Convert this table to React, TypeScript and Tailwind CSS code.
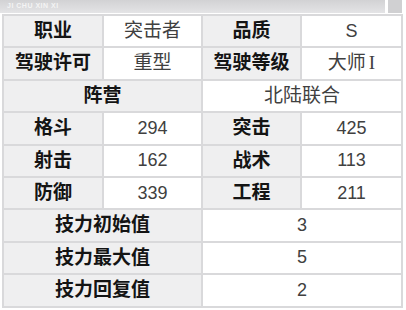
import React from "react";

const font = { fontFamily: '"Liberation Sans", "Noto Sans CJK SC", sans-serif' };

function H({ children, span }: { children: React.ReactNode; span?: boolean }) {
  return (
    <div
      className={`flex items-center justify-center bg-[#efeff0] text-[19px] font-bold text-[#141414] ${span ? "col-span-2" : ""}`}
    >
      {children}
    </div>
  );
}

function V({ children, span, num }: { children: React.ReactNode; span?: boolean; num?: boolean }) {
  return (
    <div
      className={`flex items-center justify-center bg-white ${num ? "text-[18px]" : "text-[19px]"} text-[#404040] ${span ? "col-span-2" : ""}`}
    >
      {children}
    </div>
  );
}

export default function App() {
  return (
    <div className="w-[406px] h-[310px] bg-white overflow-hidden" style={font}>
      <div className="flex h-[13px] items-stretch pr-[4px]">
        <div className="flex flex-1 items-center bg-gradient-to-b from-[#d2d2d4] to-[#e4e4e6] pl-[7px] text-[7px] font-bold tracking-[0.5px] text-[#f4f4f4]">
          JI CHU XIN XI
        </div>
        <div className="ml-[3px] w-[14px] bg-[#d0d0d2]" />
      </div>
      <div className="ml-[2px] mt-[1px] w-[401px] p-[2px] bg-[#d9d9db] grid grid-cols-[98px_97px_97px_99px] grid-rows-[repeat(9,30.4px)] gap-[2px]">
        <H>职业</H>
        <V>突击者</V>
        <H>品质</H>
        <V num>S</V>

        <H>驾驶许可</H>
        <V>重型</V>
        <H>驾驶等级</H>
        <V>
          大师
          <span className="ml-[3px]" style={{ fontFamily: '"Liberation Serif", serif' }}>
            I
          </span>
        </V>

        <H span>阵营</H>
        <V span>北陆联合</V>

        <H>格斗</H>
        <V num>294</V>
        <H>突击</H>
        <V num>425</V>

        <H>射击</H>
        <V num>162</V>
        <H>战术</H>
        <V num>113</V>

        <H>防御</H>
        <V num>339</V>
        <H>工程</H>
        <V num>211</V>

        <H span>技力初始值</H>
        <V span num>3</V>
        <H span>技力最大值</H>
        <V span num>5</V>
        <H span>技力回复值</H>
        <V span num>2</V>
      </div>
    </div>
  );
}
